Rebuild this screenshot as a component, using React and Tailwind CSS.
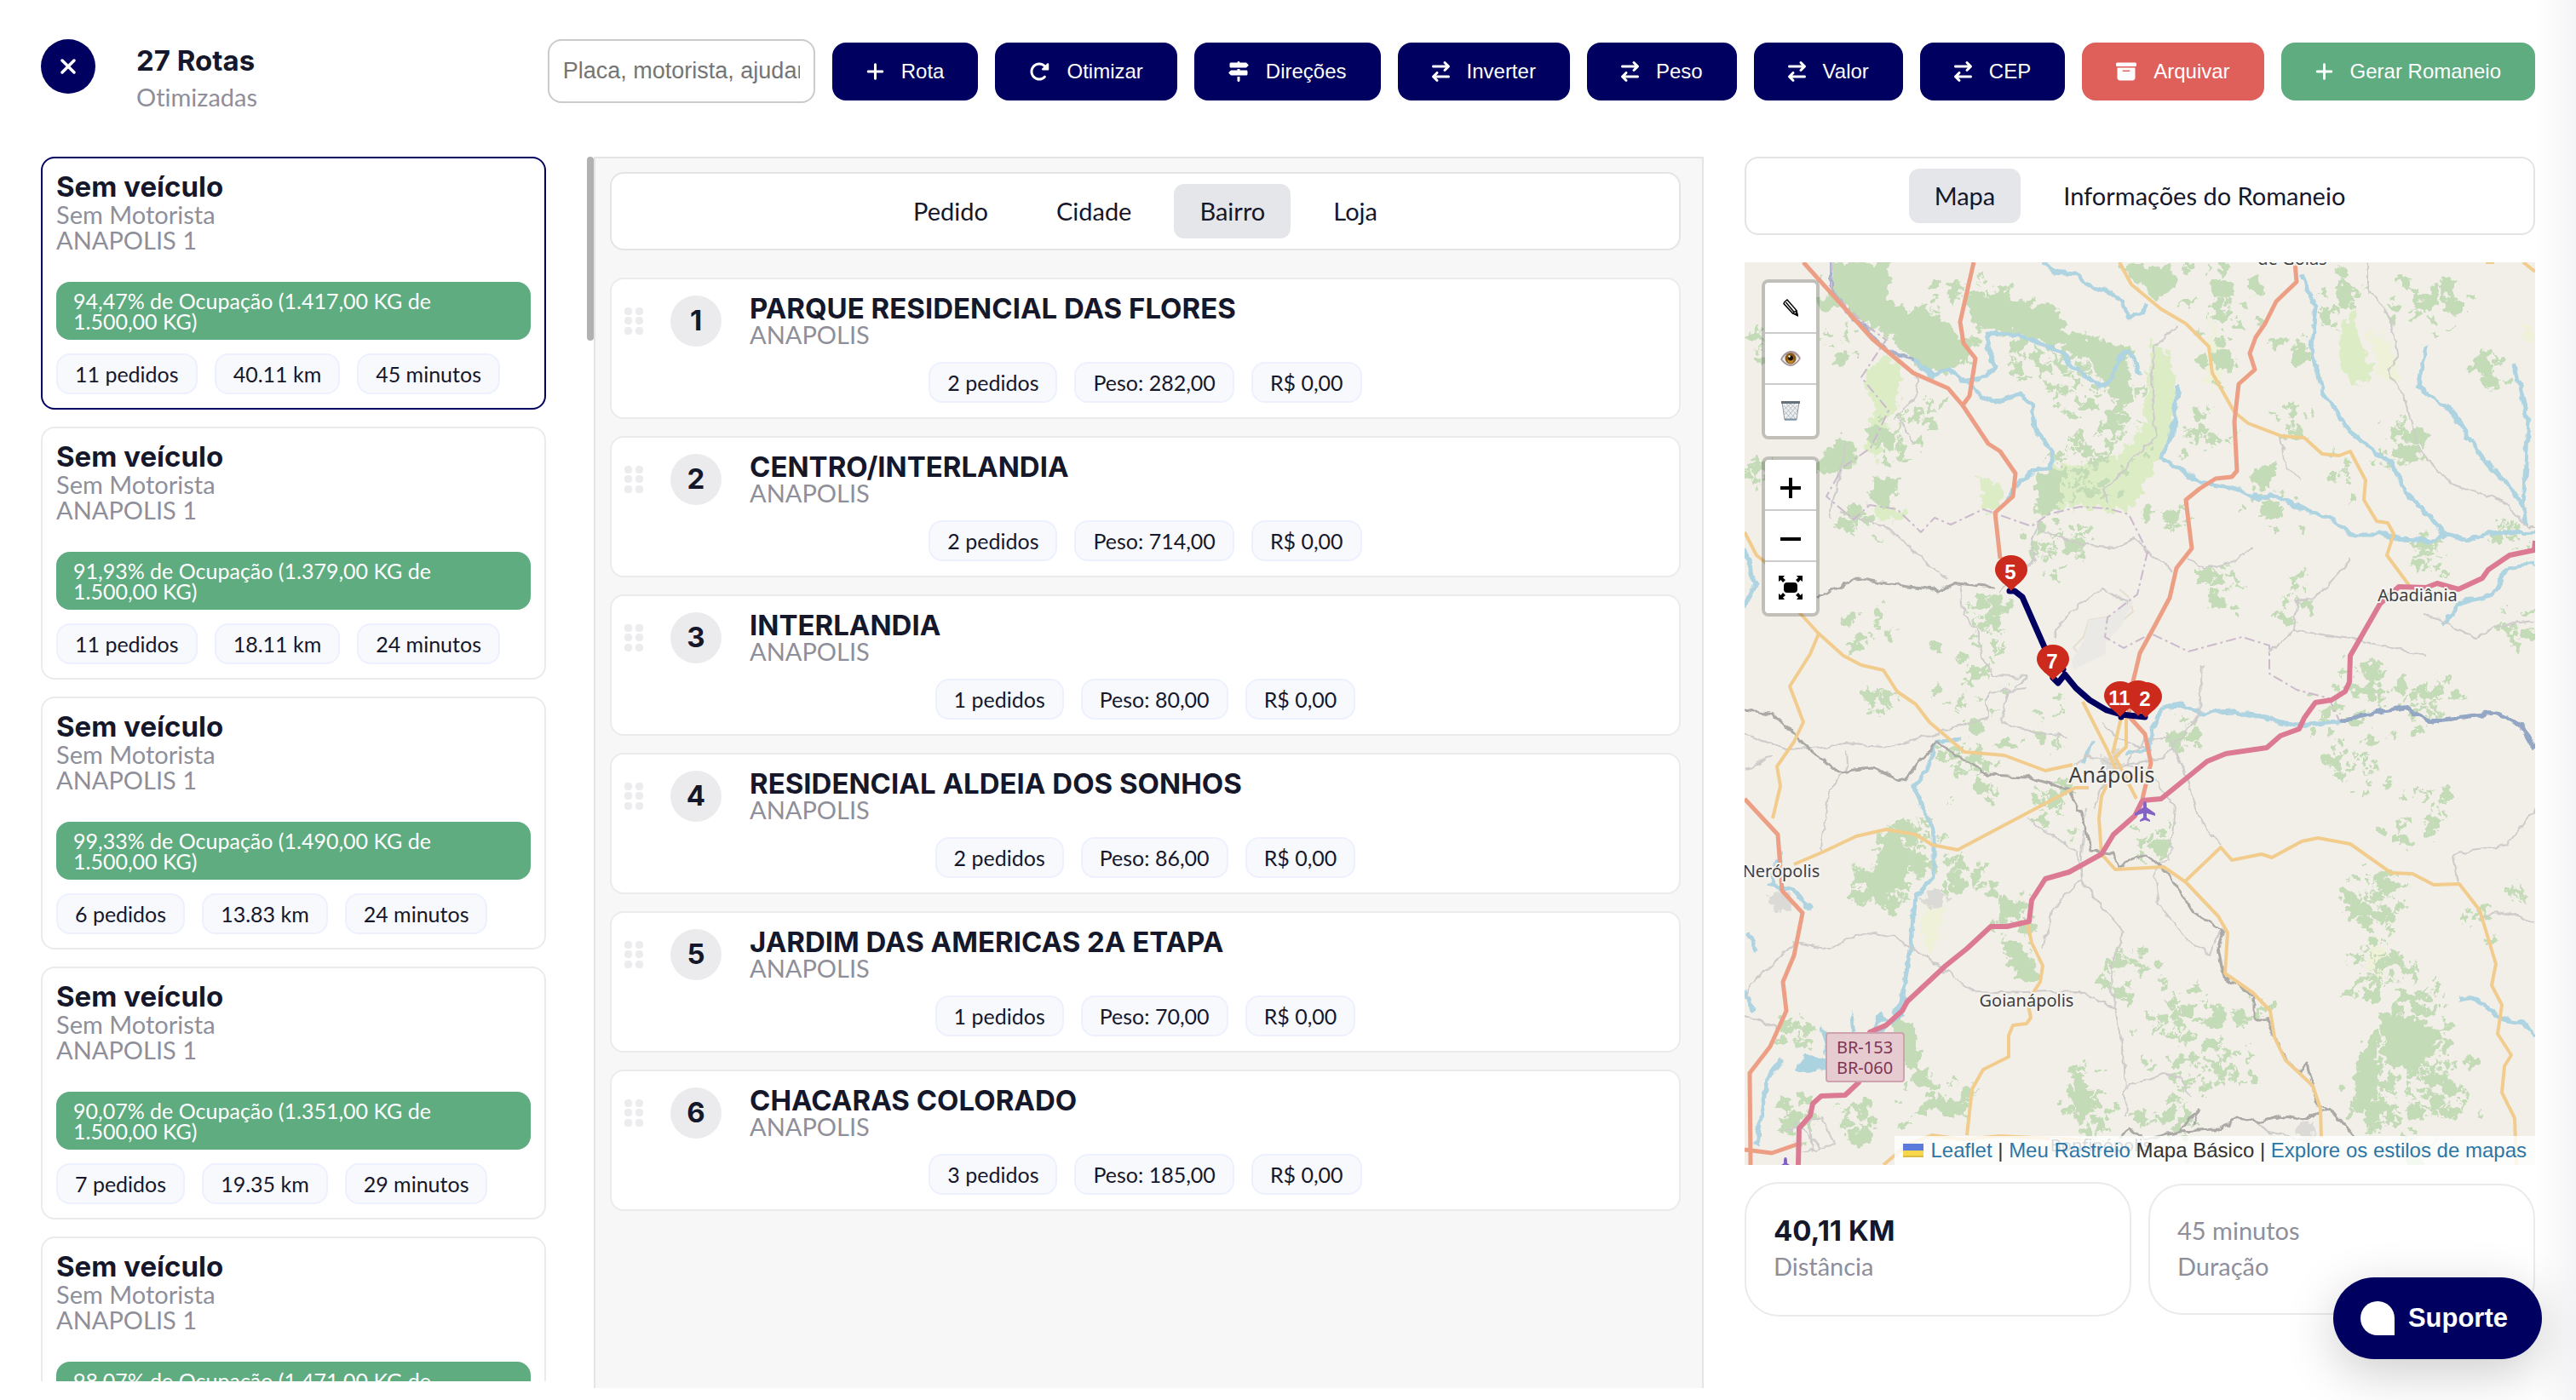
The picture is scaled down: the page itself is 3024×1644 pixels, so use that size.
import { useState } from "react";
import {
  FaArrowRightArrowLeft,
  FaBoxArchive,
  FaPlus,
  FaRotateRight,
  FaSignsPost,
  FaXmark,
} from "react-icons/fa6";

const vehicles = [
  { id: 1, occupation: "94,47%", load: "1.417,00", orders: "11 pedidos", distance: "40.11 km", time: "45 minutos" },
  { id: 2, occupation: "91,93%", load: "1.379,00", orders: "11 pedidos", distance: "18.11 km", time: "24 minutos" },
  { id: 3, occupation: "99,33%", load: "1.490,00", orders: "6 pedidos", distance: "13.83 km", time: "24 minutos" },
  { id: 4, occupation: "90,07%", load: "1.351,00", orders: "7 pedidos", distance: "19.35 km", time: "29 minutos" },
  { id: 5, occupation: "98,07%", load: "1.471,00", orders: "8 pedidos", distance: "22.40 km", time: "31 minutos" },
];

const stops = [
  { name: "PARQUE RESIDENCIAL DAS FLORES", orders: "2 pedidos", weight: "282,00" },
  { name: "CENTRO/INTERLANDIA", orders: "2 pedidos", weight: "714,00" },
  { name: "INTERLANDIA", orders: "1 pedidos", weight: "80,00" },
  { name: "RESIDENCIAL ALDEIA DOS SONHOS", orders: "2 pedidos", weight: "86,00" },
  { name: "JARDIM DAS AMERICAS 2A ETAPA", orders: "1 pedidos", weight: "70,00" },
  { name: "CHACARAS COLORADO", orders: "3 pedidos", weight: "185,00" },
];

const actions = [
  { label: "Rota", Icon: FaPlus, icon: "w-[21px]", color: "bg-[#000061]" },
  { label: "Otimizar", Icon: FaRotateRight, icon: "w-6", color: "bg-[#000061]" },
  { label: "Direções", Icon: FaSignsPost, icon: "w-6", color: "bg-[#000061]" },
  { label: "Inverter", Icon: FaArrowRightArrowLeft, icon: "w-[21px]", color: "bg-[#000061]" },
  { label: "Peso", Icon: FaArrowRightArrowLeft, icon: "w-[21px]", color: "bg-[#000061]" },
  { label: "Valor", Icon: FaArrowRightArrowLeft, icon: "w-[21px]", color: "bg-[#000061]" },
  { label: "CEP", Icon: FaArrowRightArrowLeft, icon: "w-[21px]", color: "bg-[#000061]" },
  { label: "Arquivar", Icon: FaBoxArchive, icon: "w-6", color: "bg-[#df5f5a]" },
  { label: "Gerar Romaneio", Icon: FaPlus, icon: "w-[21px]", color: "bg-[#5eac80]" },
];

const Chip = ({ children }) => (
  <span className="flex h-12 items-center rounded-2xl border-2 border-[#edf0fe] bg-[#f8f9fd] px-5 text-[25px] leading-6 text-[#15172b]">
    {children}
  </span>
);

const Tabs = ({ tabs, initial }) => {
  const [active, setActive] = useState(initial);
  return (
    <div className="flex h-[92px] shrink-0 items-center justify-center gap-5 rounded-2xl border-2 border-[#e4e4e5] bg-white">
      {tabs.map((tab) => (
        <button
          key={tab}
          type="button"
          onClick={() => setActive(tab)}
          className={
            tab === active
              ? "h-16 rounded-xl bg-[#e5e6ea] px-[30px] text-[29px]"
              : "h-16 rounded-xl px-[30px] text-[29px]"
          }
        >
          {tab}
        </button>
      ))}
    </div>
  );
};

const Header = () => (
  <header className="flex shrink-0 items-start justify-between px-12 pt-[46px]">
    <div className="flex gap-12">
      <button
        type="button"
        aria-label="Fechar"
        className="flex size-16 items-center justify-center rounded-full bg-[#000061] text-white"
      >
        <FaXmark className="size-7" />
      </button>
      <div>
        <h1 className="font-[Inter,sans-serif] text-[33px] leading-[50px] font-bold">27 Rotas</h1>
        <p className="text-[29px] leading-9 text-[#8e8f9a]">Otimizadas</p>
      </div>
    </div>
    <div className="flex items-center gap-5 font-['Liberation_Sans',sans-serif]">
      <input
        type="text"
        aria-label="Buscar rota"
        placeholder="Placa, motorista, ajudante"
        className="h-[75px] w-[314px] rounded-2xl border-2 border-[#cbcbcb] px-4 text-[27px] placeholder:text-[#757575]"
      />
      {actions.map(({ label, Icon, icon, color }) => (
        <button
          key={label}
          type="button"
          className={`flex h-[68px] items-center gap-5 rounded-2xl px-10 text-2xl text-white ${color}`}
        >
          <Icon className={`h-6 ${icon}`} />
          {label}
        </button>
      ))}
    </div>
  </header>
);

const VehicleCard = ({ vehicle, selected, onSelect }) => (
  <article
    onClick={onSelect}
    className={`shrink-0 rounded-2xl border-2 px-4 pt-[15px] pb-4 ${
      selected ? "border-[#000061]" : "border-[#ebebec]"
    }`}
  >
    <h2 className="font-[Inter,sans-serif] text-[33px] leading-9 font-bold">Sem veículo</h2>
    <p className="text-[29px] leading-[30px] text-[#8e8f9a]">Sem Motorista</p>
    <p className="text-[29px] leading-[30px] text-[#8e8f9a]">ANAPOLIS 1</p>
    <div className="mt-[34px] rounded-2xl bg-[#5eac80] px-5 py-[10px] text-[25px] leading-6 text-white">
      <p className="w-[460px]">
        {vehicle.occupation} de Ocupação ({vehicle.load} KG de 1.500,00 KG)
      </p>
    </div>
    <div className="mt-4 flex gap-5">
      <Chip>{vehicle.orders}</Chip>
      <Chip>{vehicle.distance}</Chip>
      <Chip>{vehicle.time}</Chip>
    </div>
  </article>
);

const StopCard = ({ stop, number }) => (
  <article className="h-[166px] shrink-0 rounded-2xl border-2 border-[#ebebec] bg-white">
    <div className="flex pt-[19px] pl-[15px]">
      <div className="mt-[14px] grid h-8 grid-cols-2 gap-x-1 gap-y-[2px]">
        {[0, 1, 2, 3, 4, 5].map((dot) => (
          <span key={dot} className="size-[9px] rounded-[4px] bg-[#ececee]" />
        ))}
      </div>
      <span className="ml-8 flex size-[60px] items-center justify-center rounded-full bg-[#ebebed] font-[Inter,sans-serif] text-[33px] font-bold">
        {number}
      </span>
      <div className="ml-[33px]">
        <h3 className="font-[Inter,sans-serif] text-[33px] leading-[30px] font-bold">{stop.name}</h3>
        <p className="text-[29px] leading-8 text-[#8e8f9a]">ANAPOLIS</p>
      </div>
    </div>
    <div className="mt-4 flex justify-center gap-5">
      <Chip>{stop.orders}</Chip>
      <Chip>Peso: {stop.weight}</Chip>
      <Chip>R$ 0,00</Chip>
    </div>
  </article>
);

// Map artwork, in a 928 x 1060 box
const forests = [
  "109,0 172,0 166,46 200,60 236,69 261,95 229,107 191,91 153,76 122,57 102,30",
  "175,58 210,52 262,92 268,108 236,132 200,122 176,92",
  "261,34 300,42 337,46 350,66 362,76 413,88 451,99 454,137 426,145 400,111 337,88 300,82 267,76",
  "330,52 364,50 378,84 388,96 352,98 336,80",
  "440,4 500,4 506,30 480,44 462,24",
  "76,248 112,204 132,214 130,240 100,246",
  "146,250 180,255 172,290 150,286",
  "550,104 576,110 566,132 552,124",
  "420,104 450,100 456,160 440,168 424,150",
  "170,660 200,700 180,740 130,756 150,720",
  "300,790 326,800 346,842 330,846 308,820",
  "170,890 200,895 206,950 186,940 176,930",
  "214,972 262,990 250,1008 220,996",
  "340,250 380,240 370,290 346,302",
  "745,880 800,890 806,930 780,950 750,940",
  "720,930 745,900 742,980 716,990",
  "596,240 626,236 616,268 598,266",
  "376,968 400,972 410,1000 392,1010",
];
const meadows = [
  "477,91 500,110 508,145 502,199 489,229 470,262 451,294 394,287 362,287 362,237 400,234 438,229 466,200",
  "166,106 184,126 180,160 160,200 156,236 142,220 150,170 139,135",
  "134,4 160,2 156,60 142,56",
  "700,80 716,56 722,90 738,130 716,146 698,120",
  "276,250 300,262 306,292 280,292",
  "150,285 190,290 184,304 156,300",
];
const fields = [
  "213,744 230,750 232,790 212,812 208,780",
  "545,60 562,110 556,150 544,140",
  "730,80 760,96 768,136 748,140",
  "740,790 756,820 744,850 730,824",
  "912,74 928,70 928,96 916,92",
];
const built = [
  "213,742 228,736 238,750 224,758 212,756",
  "30,744 52,736 56,758 36,764",
  "420,580 436,576 446,592 430,600 418,594",
  "648,1006 670,1010 662,1034 650,1030",
];
// [x, y, spread, how many patches]
const thickets = [
  [120, 60, 60, 26], [300, 80, 70, 34], [400, 130, 60, 30], [236, 40, 30, 8], [560, 30, 50, 14],
  [700, 40, 40, 14], [800, 40, 60, 26], [560, 90, 60, 16], [650, 100, 36, 12], [880, 120, 30, 12],
  [420, 180, 60, 36], [400, 240, 50, 34], [180, 200, 40, 14], [210, 180, 26, 8], [540, 200, 40, 16],
  [640, 180, 40, 10], [770, 220, 40, 20], [700, 250, 40, 10], [620, 290, 40, 16], [500, 300, 30, 12],
  [370, 340, 46, 22], [130, 310, 26, 8], [290, 420, 36, 22], [150, 430, 34, 12], [560, 380, 36, 18],
  [640, 400, 40, 14], [810, 350, 30, 10], [900, 320, 26, 10], [900, 440, 34, 12], [16, 240, 26, 10],
  [20, 100, 24, 7], [270, 500, 60, 24], [160, 520, 30, 8], [240, 580, 40, 14], [520, 560, 30, 12],
  [720, 500, 50, 24], [800, 520, 50, 26], [720, 590, 40, 18], [790, 640, 50, 22], [280, 590, 46, 18],
  [190, 690, 46, 34], [160, 740, 50, 30], [250, 720, 36, 14], [370, 640, 36, 14], [480, 680, 36, 10],
  [740, 760, 50, 34], [740, 840, 44, 28], [790, 860, 50, 20], [860, 780, 24, 6], [910, 740, 18, 8],
  [310, 770, 36, 20], [450, 840, 40, 12], [520, 870, 46, 22], [520, 920, 70, 36], [560, 940, 50, 20],
  [400, 980, 46, 26], [500, 1010, 50, 18], [220, 980, 50, 20], [780, 920, 60, 50], [820, 960, 50, 30],
  [740, 990, 50, 30], [800, 1010, 50, 24], [60, 900, 30, 10], [60, 1010, 36, 14], [130, 1000, 40, 14],
  [680, 540, 50, 8], [600, 860, 30, 5], [350, 540, 40, 9],
];
const lightRoads = [
  "M201 130L204 157L179 179L198 212",
  "M508 74L480 99L478 153L483 206L454 233L423 267L426 283",
  "M730 0V26L759 69L768 111L755 126L778 168L793 222L828 260L889 279L920 311H928",
  "M112 294L166 310L217 356L238 371",
  "M343 313L394 331L432 336L458 325L502 363",
  "M347 302L337 325L340 348L299 388",
  "M252 378L258 413L275 436L277 459L293 485L331 487",
  "M362 440L381 410L420 384L451 400",
  "M521 348L540 359L578 350L596 336",
  "M711 348L679 386L648 400L645 432L616 459",
  "M645 432L711 442L800 462",
  "M797 413L812 417L857 440L895 425L928 421",
  "M537 473L534 531L489 584L448 590",
  "M500 560L521 611L534 653L559 686",
  "M394 726L445 787L429 829L435 879L445 921L448 1005",
  "M394 726L362 757L350 806",
  "M331 653L391 693L394 726L400 640",
  "M61 799L99 806L144 787L172 791L217 818L267 856L331 858L394 856L435 877",
  "M61 799L8 845L0 865",
  "M832 695L895 684L928 642M832 695L838 730",
  "M863 768L895 762L928 776",
  "M0 554L52 573L128 565L172 569L236 550L285 535V505L331 500",
  "M480 715L486 753L521 797L545 812L562 782",
  "M630 206L636 244L652 254",
  "M448 590L470 560L500 556M448 590L430 600L410 640M448 590L478 600L505 640L500 695L480 715M420 540L440 560L470 570M440 590L400 580L385 592",
  "M44 1020L90 1005L106 1036L66 1045M60 1010L90 1040M76 1004L80 1044",
  "M331 487L310 505L300 540L340 552L380 556",
  "M0 595L33 580M119 572L120 590L98 625L90 690",
  "M120 212L100 300M0 885L40 900",
  "M448 970L490 952L514 958L522 980",
  "M598 1005L611 1020L700 1040",
];
const railways = [
  "M0 525L33 531L64 561L109 598L150 594L188 609L226 563L286 602L331 604L381 619L395 646L407 692L432 694L438 709L470 695L496 715L527 764L562 785L556 806L562 837L598 862V889H613L638 940L651 950L660 942L673 990L692 998L717 1028",
  "M686 994L654 1007L629 1002L603 1009L578 1005L553 1019L511 1021L534 992L527 1013M440 1030L450 1016L470 1030L511 1021",
  "M87 394L131 371L172 378L229 386L248 377L293 382",
];
const rivers = [
  "M350 0L362 11L388 13L400 26L426 34L442 46L452 65L470 57L471 49",
  "M198 114L223 134L239 126L261 139L283 135L294 122L285 99L286 83L324 86L372 105L388 126L419 147L432 137L438 114L451 105L464 130",
  "M261 139L277 157L296 164L324 155L337 168L340 195L362 223L359 239L340 245L324 256L308 279",
  "M509 145L502 199L489 229L534 258L578 266L606 277L625 275L664 294L686 298L711 319H749L768 325L812 327L825 319L850 327L870 319L928 317",
  "M654 15L670 53L665 99L679 153L711 199L762 239L774 268L800 294L822 319",
  "M800 99L790 145L831 176L863 225L901 268L914 287L917 308",
  "M904 122L920 187L914 287",
  "M928 354L895 359L879 390L838 401L819 426",
  "M480 546L489 525L511 519L537 529L575 527L648 544L698 540",
  "M255 560L226 562L213 596L199 615L210 642L222 672V722L201 745L194 806L185 868L175 883",
  "M44 935L26 960L20 998L14 1036",
  "M838 864H857L889 889L914 893L928 910",
  "M0 337L12 378L0 405",
  "M44 692L30 730L58 738L77 760",
  "M410 562L397 588M480 546L473 573L448 577",
  "M0 856L12 880M5 788L14 810",
];
const boundaries = [
  "M102 0V34L140 72L166 91L137 135L169 174L148 218L115 241L96 275L128 302L147 285L179 290L207 317L223 300L242 308L280 290L337 310L356 296L394 287L426 289L451 296L473 340L461 390L426 417L423 440L445 453L477 436L521 457L584 440L616 450V483L648 502L686 512L698 538",
];
const yellowRoads = [
  "M440 0L454 26L489 55L518 72L545 99L549 130L575 176L591 189L630 204L657 206L678 225L698 227L711 222L729 256L727 279L742 304L755 306L762 319L754 344L782 382",
  "M0 317L14 344L24 352L64 411L87 436L77 460L53 498L69 540L58 563L38 592L42 615L33 653",
  "M87 436L116 462L137 473L163 479L179 504L201 519L217 540L258 575L305 579L353 597L385 590",
  "M58 707L93 692L131 674L166 666L201 672L220 684L250 690L388 617H404",
  "M397 516L426 573L435 594L419 627L416 653L419 695L435 713L492 710L518 728L556 768L567 787L564 835L597 858L617 879L622 910L635 937L667 967L676 994L677 1028",
  "M448 535V569L435 581L460 630M442 535L432 577",
  "M516 728L559 687L572 702L607 695L619 699L654 680L673 676L711 683L759 717L784 718L809 731L839 730L863 761L882 824L877 849L889 872L884 906L900 931L892 944L889 975L904 1005L906 1060",
  "M332 776L337 799L350 826L347 845L332 868L336 887L331 894L315 896L310 908V933L280 948L267 971L261 1025",
  "M163 1060L191 1036L220 1025L255 1030L300 1026L380 1030L500 1040M870 0H880M914 0L928 11",
];
const salmonRoads = [
  "M69 0L150 90L198 130L239 148L256 168L286 213L300 222L318 248L315 275L294 294L300 348",
  "M269 0L253 70L257 95L271 113L264 157L256 168",
  "M646 0L648 23L624 46L611 72L600 88L593 107L599 126L580 143L575 187L578 245L572 252L553 254L534 266L518 279L525 336L507 359L499 394L483 424L464 459L459 480L454 500L451 533L470 554L477 588L467 630",
  "M0 630L39 672L44 738L68 764L58 814L45 845L49 879L30 921L6 952L7 1060M0 1042L32 1046L64 1035",
];
const motorway =
  "M928 327L927 338L898 344L873 361L866 371L838 384L813 377L800 382L768 381L746 401L711 462L710 493L705 504L689 514L670 517L657 535L651 548L629 556L613 570L565 577L543 586L489 630L467 632L458 650L433 672L419 695L381 716L353 724L337 749L334 774L308 780H289L261 806L236 826L191 868L185 879L166 896L147 904L134 963L118 978L90 979L80 988L77 1002L64 1017L63 1060";

const buildPatches = () => {
  let seed = 7;
  const random = () => {
    seed = (seed * 16807) % 2147483647;
    return seed / 2147483647;
  };
  return thickets.flatMap(([cx, cy, spread, count]) =>
    Array.from({ length: count }, () => {
      const x = cx + (random() + random() - 1) * spread;
      const y = cy + (random() + random() - 1) * spread;
      const size = 3 + random() * random() * 11;
      const points = Array.from({ length: 7 }, (_, i) => {
        const angle = (i / 7) * Math.PI * 2;
        const radius = size * (0.4 + random() * 0.9);
        return `${Math.round(x + Math.cos(angle) * radius)},${Math.round(y + Math.sin(angle) * radius)}`;
      });
      return points.join(" ");
    })
  );
};
const patches = buildPatches();

const Lines = ({ paths, color, width, dash }) => (
  <g fill="none" stroke={color} strokeWidth={width} strokeDasharray={dash} strokeLinejoin="round">
    {paths.map((d) => (
      <path key={d} d={d} />
    ))}
  </g>
);

const Shapes = ({ items, color }) => (
  <g fill={color}>
    {items.map((points, i) => (
      <polygon key={i} points={points} />
    ))}
  </g>
);

const Pin = ({ x, y, label }) => (
  <g transform={`translate(${x} ${y})`}>
    <path d="M0 0C-4 -6 -19 -14 -19 -25A19 17 0 0 1 19 -25C19 -14 4 -6 0 0Z" fill="#cb2a1d" />
    <text
      x={-1}
      y={-14}
      textAnchor="middle"
      fontSize="24"
      className="fill-white font-['Liberation_Sans',sans-serif] font-bold"
    >
      {label}
    </text>
  </g>
);

const Plane = ({ x, y }) => (
  <path
    transform={`translate(${x} ${y})`}
    d="M0 -11C2 -11 2 -8 2 -4L12 3V6L2 3V8L6 11V13L0 11L-6 13V11L-2 8V3L-12 6V3L-2 -4C-2 -8 -2 -11 0 -11Z"
    fill="#8461c4"
  />
);

const MapDrawing = () => (
  <svg
    viewBox="0 0 928 1060"
    preserveAspectRatio="xMidYMid slice"
    role="img"
    aria-label="Mapa da rota"
    className="absolute inset-0 size-full"
  >
    <defs>
      <filter id="rough" x="0" y="0" width="100%" height="100%">
        <feTurbulence type="fractalNoise" baseFrequency="0.09" numOctaves="3" seed="4" />
        <feDisplacementMap in="SourceGraphic" scale="22" xChannelSelector="R" yChannelSelector="G" />
      </filter>
      <filter id="wavy" x="0" y="0" width="100%" height="100%">
        <feTurbulence type="fractalNoise" baseFrequency="0.08" numOctaves="2" seed="9" />
        <feDisplacementMap in="SourceGraphic" scale="9" xChannelSelector="R" yChannelSelector="G" />
      </filter>
    </defs>
    <rect width="928" height="1060" fill="#f2efe9" />
    <g filter="url(#rough)">
      <rect width="928" height="1060" fill="#f2efe9" />
      <Shapes items={fields} color="#eff1d9" />
      <Shapes items={meadows} color="#dcedc5" />
      <Shapes items={built} color="#dcdad7" />
      <Shapes items={forests} color="#c4dbb7" />
      <Shapes items={patches} color="#c4dbb7" />
    </g>
    <path
      d="M404 420L430 416L440 424L456 410L450 392L440 384M404 420L398 440L386 452L394 462M404 420"
      fill="none"
      stroke="#e6dfd0"
      strokeWidth="2"
    />
    <path d="M404 420L430 416L452 392L456 400L440 430L424 446L424 460L386 478L384 468L398 444Z" fill="#ebe9e5" />
    <g filter="url(#wavy)">
      <path
        d="M182 878L168 893L150 903L132 905L108 925L96 933L70 932L56 950L78 952L98 944L120 925L140 918L165 902L186 884ZM126 905L124 876L132 900ZM96 930L88 896L104 912ZM150 903L160 880L166 890Z"
        fill="#aad3df"
      />
      <Lines paths={rivers} color="#aed3e1" width={5} />
      <Lines paths={["M698 540L727 531L774 523L806 539L882 529L911 542L928 573"]} color="#93a6c4" width={5} />
      <Lines paths={["M102 0V34L122 60L140 72L158 96L172 104L198 114"]} color="#a5b4cc" width={4} />
      <Lines paths={lightRoads} color="#cdcccb" width={2} />
      <Lines paths={railways} color="#aaa9a6" width={3} />
    </g>
    <Lines paths={boundaries} color="#cbb9cd" width={2} dash="12 4 3 4" />
    <Lines paths={yellowRoads} color="#f1cc8d" width={4} />
    <Lines paths={salmonRoads} color="#ec9f85" width={5} />
    <Lines paths={[motorway]} color="#dc7a94" width={6} />
    <Plane x={470} y={644} />
    <Plane x={48} y={1062} />

    <g
      className="font-['Noto_Sans',sans-serif]"
      fill="#3f3f3f"
      stroke="#f5f3ef"
      strokeWidth="4"
      paintOrder="stroke"
      textAnchor="middle"
    >
      <text x="643" y="3" fontSize="20">de Goiás</text>
      <text x="431" y="611" fontSize="25">Anápolis</text>
      <text x="43" y="722" fontSize="20">Nerópolis</text>
      <text x="790" y="398" fontSize="20">Abadiânia</text>
      <text x="331" y="874" fontSize="20">Goianápolis</text>
      <text x="418" y="1044" fontSize="20">Bonfinópolis</text>
    </g>
    <rect x="96" y="905" width="91" height="57" rx="3" fill="#e6ccd1" stroke="#cfa3ae" strokeWidth="2" />
    <g className="font-['Noto_Sans',sans-serif]" fill="#7f3552" fontSize="20" textAnchor="middle">
      <text x="141" y="929">BR-153</text>
      <text x="141" y="953">BR-060</text>
    </g>

    <path
      d="M311 386H317L326 393L352 452L374 478M362 488L368 494L376 484L389 500L405 514L425 526L442 531L470 534M442 534V531"
      fill="none"
      stroke="#000061"
      strokeWidth="7"
      strokeLinecap="round"
      strokeLinejoin="round"
    />
    <Pin x={313} y={386} label="5" />
    <Pin x={362} y={491} label="7" />
    <Pin x={462} y={533} />
    <Pin x={471} y={535} label="2" />
    <Pin x={441} y={534} label="11" />
  </svg>
);

const PencilIcon = () => (
  <svg viewBox="0 0 24 24" className="size-6" fill="none" stroke="#000" strokeWidth="1.5">
    <path d="M5 5.500L8 3L19 15.500L20 21L14.500 19L4 7.500ZM6.500 6L16.500 18M14.500 19L19 15.500" />
    <path d="M17.500 20L20 21.500L19.300 17.800Z" fill="#000" />
  </svg>
);

const EyeIcon = () => (
  <svg viewBox="0 0 24 20" className="h-5 w-6">
    <path d="M0 11C4 3 9 1 13 1C18 1 22 5 24 10C20 16 16 19 12 19C7 19 3 15 0 11Z" fill="#a8989a" />
    <path d="M2 11C5 6 9 4 12 4C17 4 20 7 22 10C19 14 16 17 12 17C8 17 5 14 2 11Z" fill="#ecebef" />
    <circle cx="12" cy="10" r="6.500" fill="#8a5a14" />
    <circle cx="12" cy="12" r="3.500" fill="#c08a2c" />
    <circle cx="12" cy="9.500" r="3" fill="#1b1009" />
    <circle cx="10.500" cy="7.500" r="1.200" fill="#fff" />
  </svg>
);

const TrashIcon = () => (
  <svg viewBox="0 0 24 24" className="size-6" fill="none">
    <path d="M2 2H22L19 23H5Z" fill="#edeff0" stroke="#8d979e" />
    <path
      d="M4 6L18 22M7 4L20 18M12 4L20 12M4 12L14 23M20 6L6 22M17 4L4 18M12 4L3 12M20 12L11 23"
      stroke="#b6bdc2"
    />
    <path d="M1 2.500H23" stroke="#65717b" strokeWidth="3" />
    <path d="M5 22.500H19" stroke="#7d93a8" strokeWidth="2" />
  </svg>
);

const ZoomInIcon = () => (
  <svg viewBox="0 0 24 24" className="mt-2 size-6" stroke="#000" strokeWidth="4">
    <path d="M12 0V24M0 12H24" />
  </svg>
);

const ZoomOutIcon = () => (
  <svg viewBox="0 0 24 24" className="mt-2 size-6" stroke="#000" strokeWidth="4">
    <path d="M0 12H24" />
  </svg>
);

const FullscreenIcon = () => (
  <svg viewBox="0 0 28 28" className="size-7">
    <rect x="6" y="8" width="16" height="12" rx="4" />
    <path d="M0 0H7L5 2.500L8 5L5 8L2.500 5L0 7ZM28 0H21L23 2.500L20 5L23 8L25.500 5L28 7ZM0 28H7L5 25.500L8 23L5 20L2.500 23L0 21ZM28 28H21L23 25.500L20 23L23 20L25.500 23L28 21Z" />
  </svg>
);

const ControlGroup = ({ items }) => (
  <div className="flex w-[68px] flex-col divide-y-2 divide-[#ccc] overflow-hidden rounded-lg border-4 border-black/20 bg-white bg-clip-padding">
    {items.map(({ label, Icon }) => (
      <button key={label} type="button" aria-label={label} className="flex h-[60px] items-center justify-center">
        <Icon />
      </button>
    ))}
  </div>
);

const RouteMap = () => (
  <div className="relative mt-8 min-h-0 flex-1 overflow-hidden bg-[#f2efe9]">
    <MapDrawing />
    <div className="absolute top-5 left-5 flex flex-col gap-5">
      <ControlGroup
        items={[
          { label: "Desenhar", Icon: PencilIcon },
          { label: "Visualizar", Icon: EyeIcon },
          { label: "Remover", Icon: TrashIcon },
        ]}
      />
      <ControlGroup
        items={[
          { label: "Aproximar", Icon: ZoomInIcon },
          { label: "Afastar", Icon: ZoomOutIcon },
          { label: "Tela cheia", Icon: FullscreenIcon },
        ]}
      />
    </div>
    <div className="absolute right-0 bottom-0 flex h-[34px] items-center bg-white/80 px-[10px] font-['Liberation_Sans',sans-serif] text-2xl whitespace-pre text-[#333]">
      <svg viewBox="0 0 24 16" className="mr-2 h-4 w-6">
        <path d="M0 0H24V8H0Z" fill="#5a7bdb" />
        <path d="M0 8H24V14H0Z" fill="#f6d64a" />
        <path d="M0 14H24V16H0Z" fill="#ddbb3f" />
      </svg>
      <a href="#leaflet" className="text-[#2c76a6]">Leaflet</a>
      <span> | </span>
      <a href="#rastreio" className="text-[#2c76a6]">Meu Rastreio</a>
      <span> Mapa Básico | </span>
      <a href="#estilos" className="text-[#2c76a6]">Explore os estilos de mapas</a>
    </div>
  </div>
);

const App = () => {
  const [selectedId, setSelectedId] = useState(1);

  return (
    <div className="relative flex h-screen flex-col overflow-hidden bg-white font-[Lato,sans-serif] text-[#15172b] [font-variant-ligatures:none]">
      <Header />

      <main className="mt-[52px] grid min-h-0 flex-1 grid-cols-[649fr_1303fr_1024fr] pl-12">
        <section className="mb-[22px] flex min-h-0">
          <div className="mr-12 flex min-w-0 flex-1 flex-col gap-5 overflow-hidden">
            {vehicles.map((vehicle) => (
              <VehicleCard
                key={vehicle.id}
                vehicle={vehicle}
                selected={vehicle.id === selectedId}
                onSelect={() => setSelectedId(vehicle.id)}
              />
            ))}
          </div>
          <div className="h-[216px] w-2 rounded-full bg-[#b1b1b1]" />
        </section>

        <section className="mb-[14px] flex min-h-0 flex-col gap-5 overflow-hidden border-2 border-b-0 border-[#e4e4e5] bg-[#f7f7f7] py-4 pr-[25px] pl-[17px]">
          <div className="mb-3">
            <Tabs tabs={["Pedido", "Cidade", "Bairro", "Loja"]} initial="Bairro" />
          </div>
          {stops.map((stop, index) => (
            <StopCard key={stop.name} stop={stop} number={index + 1} />
          ))}
        </section>

        <section className="flex min-h-0 flex-col px-12 pb-[98px]">
          <Tabs tabs={["Mapa", "Informações do Romaneio"]} initial="Mapa" />
          <RouteMap />
          <div className="mt-5 grid grid-cols-2 items-center gap-5">
            <div className="rounded-[40px] border-2 border-[#ebebec] px-8 pt-[34px] pb-9">
              <p className="font-[Inter,sans-serif] text-[33px] leading-[42px] font-bold">40,11 KM</p>
              <p className="text-[29px] leading-[42px] text-[#8e8f9a]">Distância</p>
            </div>
            <div className="rounded-[40px] border-2 border-[#ebebec] px-8 pt-8 pb-[34px] text-[29px] leading-[42px] text-[#8e8f9a]">
              <p>45 minutos</p>
              <p>Duração</p>
            </div>
          </div>
        </section>
      </main>

      <div className="pointer-events-none absolute inset-y-0 right-0 w-12 bg-linear-to-r from-transparent to-[#f4f4f6]" />

      <button
        type="button"
        className="absolute right-10 bottom-12 flex h-24 items-center gap-4 rounded-full bg-[#000061] pr-10 pl-8 font-['Liberation_Sans',sans-serif] text-[31px] font-bold text-white shadow-[0_16px_60px_rgba(0,0,0,0.2)]"
      >
        <span className="size-10 rounded-full rounded-br-none bg-white" />
        Suporte
      </button>
    </div>
  );
};

export default App;
